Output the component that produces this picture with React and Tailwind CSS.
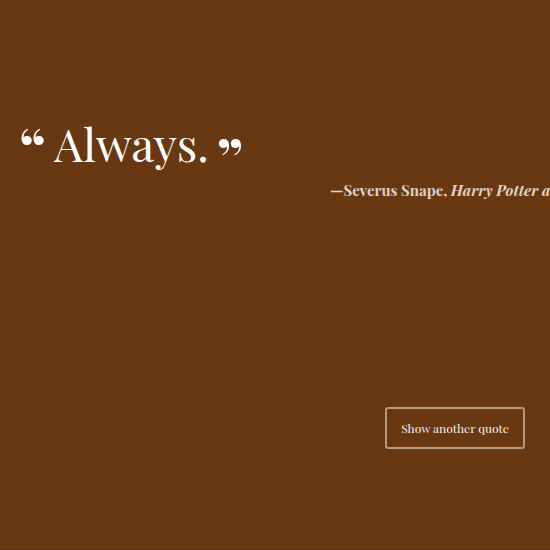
export default function App() {
  return (
    <main className="flex min-h-screen flex-col overflow-hidden border-b border-[#5c3111] bg-[#683812] pt-[113px] font-['Playfair_Display','Liberation_Serif',serif] text-white">
      <figure>
        <blockquote className="flex items-start gap-2 pl-[19px] text-[46px] leading-[60px]">
          <span className="pt-1 text-[58px] font-bold">“</span>
          <p>Always.</p>
          <span className="pt-[14px] text-[58px] font-bold">”</span>
        </blockquote>
        <figcaption className="ml-[60%] -mt-[9px] whitespace-nowrap text-[15px] font-bold leading-6 text-[#e0d2c7]">
          —Severus Snape, <cite>Harry Potter and the Deathly Hallows</cite>
        </figcaption>
      </figure>
      <button
        type="button"
        className="mt-[205px] mr-[25px] h-[42px] w-[140px] self-end rounded-[3px] border-2 border-[#b39882] text-xs text-[#f8f3ef]"
      >
        Show another quote
      </button>
    </main>
  );
}
